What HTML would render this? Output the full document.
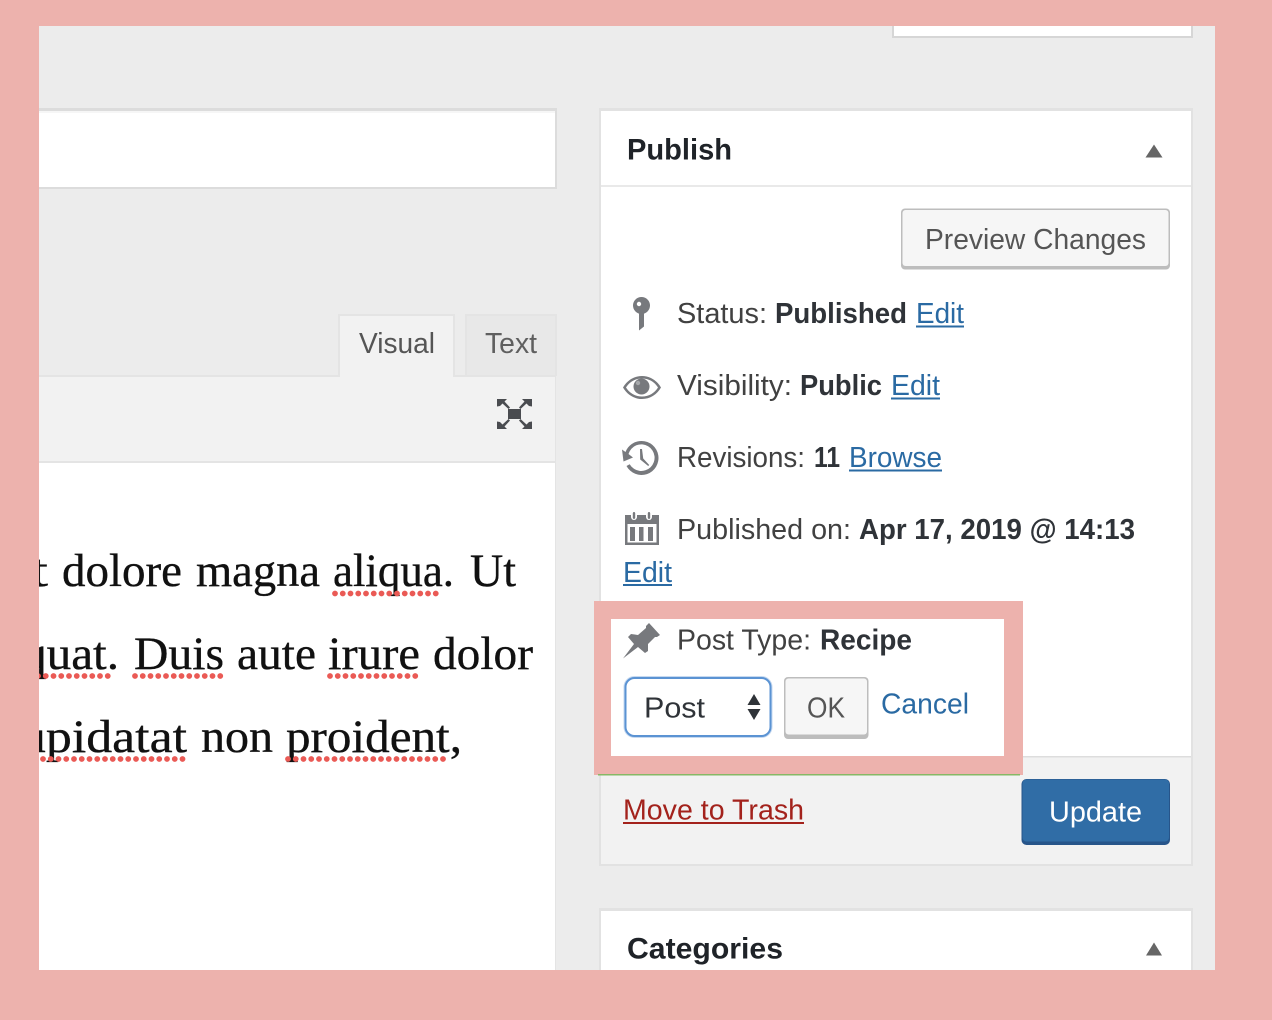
<!DOCTYPE html>
<html lang="en"><head><meta charset="utf-8"><title>Publish</title>
<style>
html,body{margin:0;padding:0;background:#edb2ad;width:1272px;height:1020px;overflow:hidden}
svg{display:block;filter:blur(.35px)}
.s{font-family:"Liberation Sans",sans-serif;font-size:28.5px;fill:#414141}
.b{font-weight:bold;fill:#2f3338}
.h{font-weight:bold;fill:#1f2328;font-size:30px}
.l{fill:#2a6aa3}
.g{font-family:"Liberation Serif",serif;font-size:47px;fill:#111;stroke:#111;stroke-width:.35px}
</style></head>
<body>
<svg width="1272" height="1020" viewBox="0 0 1272 1020" xmlns="http://www.w3.org/2000/svg">
<rect x="30" y="20" width="1190" height="955" fill="#ececec"/>
<!-- top box -->
<rect x="892" y="20" width="301" height="18" fill="#d6d6d6"/>
<rect x="894" y="20" width="297" height="16" fill="#fff"/>
<!-- title -->
<rect x="30" y="108" width="527" height="81" fill="#dcdcdc"/>
<rect x="30" y="111" width="525" height="76" fill="#fff"/>
<rect x="30" y="111" width="525" height="2" fill="#f6f6f6"/>
<!-- editor -->
<rect x="30" y="375" width="526" height="600" fill="#e4e4e4"/>
<rect x="30" y="377" width="525" height="84" fill="#f2f2f2"/>
<rect x="30" y="463" width="525" height="510" fill="#fff"/>
<rect x="338" y="314" width="117" height="63" fill="#e4e4e4"/>
<rect x="340" y="316" width="113" height="62" fill="#f2f2f2"/>
<rect x="465" y="314" width="92" height="62" fill="#e4e4e4"/>
<rect x="467" y="316" width="88" height="59" fill="#e8e8e8"/>
<text class="s" x="359" y="353" textLength="76" lengthAdjust="spacingAndGlyphs" style="fill:#555">Visual</text>
<text class="s" x="485" y="353" textLength="52" lengthAdjust="spacingAndGlyphs" style="fill:#5f5f5f">Text</text>
<!-- fullscreen icon -->
<g fill="#4a4c50">
<rect x="508" y="409" width="13" height="10"/>
<path id="fa" d="M497 399h10l-2.500 2.500 5.500 6-1.500 1.500-6-5.500-2.500 2.500-3 .5z"/>
<path d="M532 399h-10l2.500 2.500-5.500 6 1.500 1.500 6-5.500 2.500 2.500 3 .5z"/>
<path d="M497 429h10l-2.500-2.500 5.500-6-1.500-1.500-6 5.500-2.500-2.500-3-.5z"/>
<path d="M532 429h-10l2.500-2.500-5.500-6 1.500-1.500 6 5.500 2.500-2.500 3-.5z"/>
</g>
<!-- serif text -->
<text class="g" x="30" y="586" textLength="18" lengthAdjust="spacingAndGlyphs">t</text>
<text class="g" x="62" y="586" textLength="120" lengthAdjust="spacingAndGlyphs">dolore</text>
<text class="g" x="196" y="586" textLength="124" lengthAdjust="spacingAndGlyphs">magna</text>
<text class="g" x="333" y="586" textLength="121" lengthAdjust="spacingAndGlyphs">aliqua.</text>
<text class="g" x="470" y="586" textLength="46" lengthAdjust="spacingAndGlyphs">Ut</text>
<text class="g" x="22" y="669" textLength="97" lengthAdjust="spacingAndGlyphs">quat.</text>
<text class="g" x="134" y="669" textLength="90" lengthAdjust="spacingAndGlyphs">Duis</text>
<text class="g" x="237" y="669" textLength="79" lengthAdjust="spacingAndGlyphs">aute</text>
<text class="g" x="328" y="669" textLength="92" lengthAdjust="spacingAndGlyphs">irure</text>
<text class="g" x="433" y="669" textLength="100" lengthAdjust="spacingAndGlyphs">dolor</text>
<text class="g" x="20" y="752" textLength="167" lengthAdjust="spacingAndGlyphs">upidatat</text>
<text class="g" x="201" y="752" textLength="72" lengthAdjust="spacingAndGlyphs">non</text>
<text class="g" x="286" y="752" textLength="176" lengthAdjust="spacingAndGlyphs">proident,</text>
<g stroke="#ea5a55" stroke-width="5.8" stroke-linecap="round" stroke-dasharray="0 7.75" fill="none">
<path d="M335 593.500H438"/><path d="M38 676H110"/><path d="M135 676H222"/><path d="M330 676H417"/>
<path d="M43 759H183"/><path d="M288 759H444"/>
</g>
<!-- publish box -->
<rect x="599" y="108" width="594" height="758" fill="#e2e2e2"/>
<rect x="601" y="111" width="590" height="753" fill="#fff"/>
<rect x="601" y="185" width="590" height="2" fill="#e9e9e9"/>
<rect x="601" y="757" width="590" height="107" fill="#f2f2f2"/>
<rect x="601" y="756" width="590" height="1.500" fill="#ddd"/>
<text class="s h" x="627" y="159.500" textLength="105" lengthAdjust="spacingAndGlyphs">Publish</text>
<path d="M1154 144.500l8.500 13h-17z" fill="#666"/>
<!-- preview -->
<rect x="901" y="208.500" width="269" height="61" rx="4" fill="#bdbdbd"/>
<rect x="902.500" y="210" width="266" height="56" rx="3" fill="#f6f6f6"/>
<text class="s" x="925" y="249" textLength="221" lengthAdjust="spacingAndGlyphs" style="fill:#555">Preview Changes</text>
<!-- rows -->
<text class="s" x="677" y="323" textLength="90" lengthAdjust="spacingAndGlyphs">Status:</text>
<text class="s b" x="775" y="323" textLength="132" lengthAdjust="spacingAndGlyphs">Published</text>
<text class="s l" x="916" y="323" textLength="48" lengthAdjust="spacingAndGlyphs">Edit</text>
<text class="s" x="677" y="395" textLength="115" lengthAdjust="spacingAndGlyphs">Visibility:</text>
<text class="s b" x="800" y="395" textLength="82" lengthAdjust="spacingAndGlyphs">Public</text>
<text class="s l" x="891" y="395" textLength="49" lengthAdjust="spacingAndGlyphs">Edit</text>
<text class="s" x="677" y="467" textLength="128" lengthAdjust="spacingAndGlyphs">Revisions:</text>
<text class="s b" x="814" y="467" textLength="26" lengthAdjust="spacingAndGlyphs">11</text>
<text class="s l" x="849" y="467" textLength="93" lengthAdjust="spacingAndGlyphs">Browse</text>
<text class="s" x="677" y="539" textLength="174" lengthAdjust="spacingAndGlyphs">Published on:</text>
<text class="s b" x="859" y="539" textLength="276" lengthAdjust="spacingAndGlyphs">Apr 17, 2019 @ 14:13</text>
<text class="s l" x="623" y="582" textLength="49" lengthAdjust="spacingAndGlyphs">Edit</text>
<g fill="#2a6aa3">
<rect x="916" y="325.500" width="48" height="2"/><rect x="891" y="397.500" width="49" height="2"/>
<rect x="849" y="469.500" width="93" height="2"/><rect x="623" y="584" width="49" height="2"/>
<rect x="881" y="716" width="88" height="2"/>
</g>
<!-- icons -->
<g fill="#77797d">
<!-- pin -->
<circle cx="641.500" cy="305.500" r="8.500"/>
<path d="M639 312h5v14.500l-5 4z"/>
<circle cx="639" cy="304" r="2.200" fill="#fff"/>
<!-- eye -->
<path fill-rule="evenodd" d="M623 387.500c4-7 11-11.500 19-11.500s15 4.500 19 11.500c-4 7-11 11.500-19 11.500s-15-4.500-19-11.500zm3 0c3.500 5.500 9 9 16 9s12.500-3.500 16-9c-3.500-5.500-9-9-16-9s-12.500 3.500-16 9z"/>
<circle cx="641.500" cy="386.500" r="8"/>
<circle cx="638" cy="383" r="2.200" fill="#a6a8ab"/>
<!-- history -->
<path d="M641.500 441a17 17 0 1 1-15 25l3.200-1.800a13.300 13.300 0 1 0-1.200-10.200l4.500 3.500-9.500 4-1.500-12 3.500 2.500A17 17 0 0 1 641.500 441z"/>
<path d="M640 449h2l1.200 9.500 6 6.500-1 1-8-6.500z"/>
<!-- calendar -->
<path fill-rule="evenodd" d="M625 515h34v30h-34zm2.500 9v18.500h29V524z"/>
<rect x="630" y="527" width="5" height="14"/><rect x="639" y="527" width="4.500" height="14"/><rect x="648" y="527" width="5" height="14"/>
<rect x="631" y="511" width="6" height="9" rx="3" fill="#fff"/><rect x="632.800" y="512" width="2.400" height="7" rx="1.200"/>
<rect x="646" y="511" width="6" height="9" rx="3" fill="#fff"/><rect x="647.800" y="512" width="2.400" height="7" rx="1.200"/>
</g>
<!-- post type -->
<rect x="594" y="601" width="429" height="174" fill="#edb2ad"/>
<rect x="598" y="774" width="422" height="1.500" fill="#86b866"/>
<rect x="611" y="619" width="393" height="137" fill="#fff"/>
<path d="M623 658.500L634 644 628 637 631 634 638 635 646 628 646 626 649 623 660 635 657 637 655 637 648 644 648 651 645 653 638 647z" fill="#77797d"/>
<text class="s" x="677" y="649.500" textLength="134" lengthAdjust="spacingAndGlyphs">Post Type:</text>
<text class="s b" x="820" y="649.500" textLength="92" lengthAdjust="spacingAndGlyphs">Recipe</text>
<rect x="625.500" y="678" width="145" height="58" rx="9" fill="#fff" stroke="#5b93d3" stroke-opacity=".35" stroke-width="4"/>
<rect x="625.500" y="678" width="145" height="58" rx="9" fill="#fff" stroke="#5b93d3" stroke-width="2"/>
<text class="s" x="644" y="717.500" textLength="61" lengthAdjust="spacingAndGlyphs" style="fill:#2f3338">Post</text>
<path d="M754 694l6.500 11h-13zM754 720l-6.500-11h13z" fill="#2f3338"/>
<rect x="784" y="677" width="84.500" height="62" rx="4" fill="#bdbdbd"/>
<rect x="785.500" y="678.500" width="81.500" height="56" rx="3" fill="#f6f6f6"/>
<text class="s" x="807" y="717.500" textLength="38" lengthAdjust="spacingAndGlyphs" style="fill:#555">OK</text>
<text class="s l" x="881" y="713.500" textLength="88" lengthAdjust="spacingAndGlyphs">Cancel</text>
<!-- footer -->
<text class="s" x="623" y="819.500" textLength="181" lengthAdjust="spacingAndGlyphs" style="fill:#a3221c">Move to Trash</text>
<rect x="623" y="822" width="181" height="2" fill="#a3221c"/>
<rect x="1021.500" y="779" width="148.500" height="66" rx="5" fill="#27558a"/>
<rect x="1022.500" y="779.500" width="146.500" height="62" rx="4" fill="#306da6"/>
<text class="s" x="1049" y="821.500" textLength="93" lengthAdjust="spacingAndGlyphs" style="fill:#fff">Update</text>
<!-- categories -->
<rect x="599" y="908" width="594" height="70" fill="#e2e2e2"/>
<rect x="601" y="911" width="590" height="65" fill="#fff"/>
<text class="s h" x="627" y="958.500" textLength="156" lengthAdjust="spacingAndGlyphs">Categories</text>
<path d="M1154 942.500l8 13h-16z" fill="#666"/>
<!-- frame -->
<rect x="-5" y="-5" width="1282" height="31" fill="#edb2ad"/>
<rect x="-5" y="970" width="1282" height="55" fill="#edb2ad"/>
<rect x="-5" y="-5" width="44" height="1030" fill="#edb2ad"/>
<rect x="1215" y="-5" width="62" height="1030" fill="#edb2ad"/>
</svg>
</body></html>
